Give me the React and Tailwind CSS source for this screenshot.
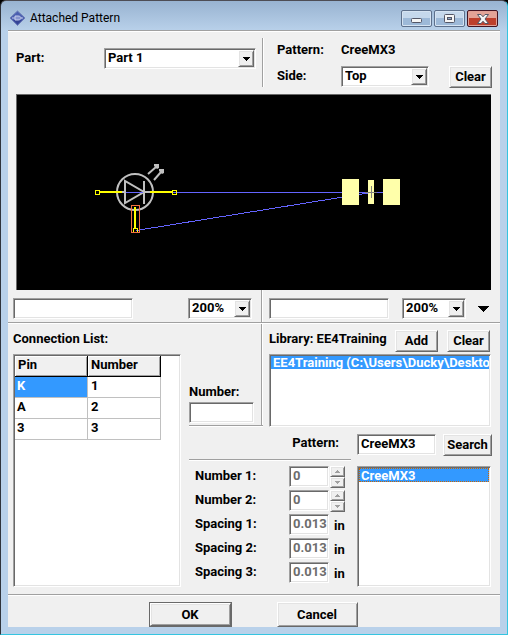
import React from "react";

const sunken =
  "border border-t-[#a0a0a0] border-l-[#a0a0a0] border-r-white border-b-white shadow-[inset_1px_1px_0_#696969,inset_-1px_-1px_0_#e3e3e3]";
const raised =
  "border border-t-white border-l-white border-r-[#696969] border-b-[#696969] bg-[#f0f0f0] shadow-[inset_1px_1px_0_#e3e3e3,inset_-1px_-1px_0_#a0a0a0]";

function Field({ className = "", ...props }) {
  return (
    <input
      type="text"
      className={`${sunken} block h-[21px] bg-white pr-0 pb-0.5 pl-[3px] outline-none disabled:text-[#6d6d6d] ${className}`}
      {...props}
    />
  );
}

function DropDown({ className = "", options, ...props }) {
  return (
    <div className={`relative ${className}`}>
      <select
        className={`${sunken} block h-[21px] w-full appearance-none bg-white pr-5 pb-0.5 pl-[3px] outline-none`}
        {...props}
      >
        {options.map((o) => (
          <option key={o}>{o}</option>
        ))}
      </select>
      <span
        className={`${raised} pointer-events-none absolute top-0.5 right-0.5 flex h-[17px] w-4 items-center justify-center`}
      >
        <svg width="7" height="4" viewBox="0 0 7 4" shapeRendering="crispEdges">
          <path d="M0 0h7v1H6v1H5v1H4v1H3V3H2V2H1V1H0z" />
        </svg>
      </span>
    </div>
  );
}

function Button({ className = "", children, ...props }) {
  return (
    <button
      type="button"
      className={`${raised} flex h-[22px] shrink-0 items-center justify-center ${className}`}
      {...props}
    >
      {children}
    </button>
  );
}

function Spinner({ label }) {
  return (
    <div className="ml-px flex w-[15px] flex-col">
      {[
        ["Increase", "M2 0h1v1h1v1h1v1H0V2h1V1h1z"],
        ["Decrease", "M0 0h5v1H4v1H3v1H2V2H1V1H0z"],
      ].map(([name, d]) => (
        <button
          key={name}
          type="button"
          disabled
          aria-label={`${name} ${label}`}
          className={`${raised} flex h-[11px] items-center justify-center`}
        >
          <svg width="5" height="3" viewBox="0 0 5 3" fill="#a0a0a0" shapeRendering="crispEdges">
            <path d={d} />
          </svg>
        </button>
      ))}
    </div>
  );
}

function HLine({ className = "" }) {
  return <div className={`h-0.5 border-t border-b border-t-[#a0a0a0] border-b-white ${className}`} />;
}

function VLine({ className = "" }) {
  return <div className={`w-0.5 border-r border-l border-r-white border-l-[#a0a0a0] ${className}`} />;
}

function TitleBar() {
  const glass =
    "flex h-[17px] w-[31px] items-center justify-center rounded-xs border border-[#5d708c] bg-linear-to-b from-[#c5d8ec] from-45% to-[#9db9d8] to-50% shadow-[inset_0_0_0_1px_#d5e3f2]";
  return (
    <header className="flex h-[29px] items-start justify-between pr-[9px] pl-2">
      <h1 className="flex items-center gap-1 pt-[9px] font-[Roboto,'Open_Sans',sans-serif] text-[12px] leading-[17px] font-normal text-black">
        <svg width="17" height="17" viewBox="0 0 17 17">
          <path d="M8.500 1 16 8 8.500 15.500 1 8z" fill="#4a5eb0" stroke="#6e7fb8" />
          <path d="M4 10 8.500 14.500 13 10z" fill="#344395" />
          <path
            d="M3 8h3m6 0h2M6 6h3c2 0 3 1 3 2s-1 2-3 2H6z"
            fill="#8795cf"
            stroke="#c5cdec"
          />
        </svg>
        Attached Pattern
      </h1>
      <div className="flex gap-0.5 pt-[9px]">
        <button type="button" aria-label="Minimize" className={glass}>
          <svg width="12" height="6" viewBox="0 0 12 6" className="mt-1">
            <rect x=".5" y=".5" width="10" height="4" rx="1" fill="#f5f5f5" stroke="#535666" />
          </svg>
        </button>
        <button type="button" aria-label="Maximize" className={glass}>
          <svg width="11" height="9" viewBox="0 0 11 9">
            <rect x=".5" y=".5" width="10" height="8" rx="1" fill="#f5f5f5" stroke="#535666" />
            <rect x="3.500" y="3.500" width="4" height="2" fill="#8fa9c9" stroke="#535666" />
          </svg>
        </button>
        <button
          type="button"
          aria-label="Close"
          className="flex h-[17px] w-[31px] items-center justify-center rounded-xs border border-[#431422] bg-linear-to-b from-[#e3a397] from-45% to-[#bd3f2c] to-50% shadow-[inset_0_0_0_1px_#e0a197]"
        >
          <svg width="12" height="10" viewBox="0 0 12 10">
            <path
              d="M.5.5h3.500L6 2.800 8 .5h3.500L8 5l3.500 4.500H8L6 7.200 4 9.500H.5L4 5z"
              fill="#f5f5f5"
              stroke="#535666"
            />
          </svg>
        </button>
      </div>
    </header>
  );
}

function Canvas() {
  return (
    <div className="mr-[9px] ml-2 border-t border-l border-[#696969] bg-black">
      <svg
        viewBox="17 95 474 195"
        className="block w-full"
        fill="none"
        role="img"
        aria-label="Symbol to pattern connections"
      >
        <g shapeRendering="crispEdges">
          <path d="M125 192h246v1H125z" fill="#6464ff" />
          <path d="M136 230.500 371 192.500" stroke="#6464ff" />
          <path d="M342 179h17v26h-17zM368 180h6v24h-6zM383 179h17v26h-17z" fill="#ffffaa" />
          <path d="M374 192h9v1h-9z" fill="#6464ff" />
          <path d="M365 192h12v1h-12zM371 186h1v12h-1z" fill="#808080" />
        </g>
        <g stroke="#c0c0c0" strokeWidth="2">
          <circle cx="135" cy="192" r="18" />
          <path d="M125 181v22l19-11zM144 181v23M144 192h9M118 192h7" />
          <path d="m148 174 8-7M154 180l7-8" />
        </g>
        <path d="m154 164 5 0v4l-2 1-3-3zM159 169h5v4l-2 1-3-3z" fill="#c0c0c0" />
        <g shapeRendering="crispEdges">
          <path d="M126 192h17v1h-17z" fill="#6464ff" />
          <path d="M100 191h22v2h-22zM150 191h22v2h-22zM134 207h2v22h-2z" fill="#ff0" />
          <path
            d="M95 190h5v5h-5zM172 190h5v5h-5zM133 228h5v5h-5zM96 191v3h3v-3zM173 191v3h3v-3zM134 229v3h3v-3z"
            fill="#ff0"
            fillRule="evenodd"
          />
          <path d="M131 205h9v28h-9zM132 206v26h7v-26z" fill="#f07040" fillRule="evenodd" />
        </g>
      </svg>
    </div>
  );
}

function PinTable() {
  const rows = [
    ["K", "1"],
    ["A", "2"],
    ["3", "3"],
  ];
  return (
    <div className={`${sunken} grow bg-white p-px`}>
      <table className="table-fixed border-separate border-spacing-0 text-left">
        <thead>
          <tr>
            {["Pin", "Number"].map((h) => (
              <th
                key={h}
                className="h-[21px] w-[73px] border-r border-b border-black bg-[#f0f0f0] p-0 pb-0.5 pl-[3px] leading-4 shadow-[inset_1px_1px_0_#fff,inset_-1px_-1px_0_#a0a0a0]"
              >
                {h}
              </th>
            ))}
          </tr>
        </thead>
        <tbody>
          {rows.map(([pin, num], i) => (
            <tr key={pin}>
              <td
                className={`h-[21px] border-r border-b border-[#c0c0c0] p-0 pb-0.5 pl-0.5 leading-4 ${i === 0 ? "bg-[#3399ff] text-white" : ""}`}
              >
                {pin}
              </td>
              <td className="h-[21px] border-r border-b border-[#c0c0c0] p-0 pb-0.5 pl-[3px] leading-4">{num}</td>
            </tr>
          ))}
        </tbody>
      </table>
    </div>
  );
}

function Parameters() {
  const items = [
    { id: "number1", label: "Number 1:", value: "0" },
    { id: "number2", label: "Number 2:", value: "0" },
    { id: "spacing1", label: "Spacing 1:", value: "0.013", unit: "in" },
    { id: "spacing2", label: "Spacing 2:", value: "0.013", unit: "in" },
    { id: "spacing3", label: "Spacing 3:", value: "0.013", unit: "in" },
  ];
  return (
    <div className="mt-[5px] flex flex-col gap-0.5 pl-1.5">
      {items.map((p) => (
        <div key={p.id} className="flex h-[22px] items-start">
          <label htmlFor={p.id} className="w-[94px] pt-0.5">
            {p.label}
          </label>
          <Field id={p.id} defaultValue={p.value} disabled className="w-10" />
          {p.unit ? <span className="pt-1 pl-[5px]">{p.unit}</span> : <Spinner label={p.label} />}
        </div>
      ))}
    </div>
  );
}

export default function App() {
  return (
    <div className="bg-black font-[Roboto,'Liberation_Sans',sans-serif] text-[13px] leading-4 font-bold text-black">
      <div className="rounded-t-md border-t border-r border-b border-l border-t-[#4d4d55] border-r-[#35c4e0] border-b-[#35c4e0] border-l-[#30343c] bg-[linear-gradient(#98b3d1,#b9d1ea_30px)]">
        <TitleBar />
        <main className="mr-[7px] mb-[7px] ml-[7px] border-t border-[#a0a0a0] bg-[#f0f0f0]">
          <section className="flex h-[63px] border-t border-white">
            <div className="flex flex-1 items-start pt-4 pl-2">
              <label htmlFor="part" className="w-[88px] pt-0.5">
                Part:
              </label>
              <DropDown id="part" options={["Part 1"]} className="mr-1.5 grow" />
            </div>
            <VLine className="mt-1.5 mb-[7px]" />
            <div className="flex w-[236px] items-end justify-between pr-2 pb-1.5 pl-[13px]">
              <div className="grid grid-cols-[64px_88px] gap-y-2 pb-px">
                <span>Pattern:</span>
                <span>CreeMX3</span>
                <label htmlFor="side" className="pt-0.5">
                  Side:
                </label>
                <DropDown id="side" options={["Top", "Bottom"]} />
              </div>
              <Button className="w-[43px]">Clear</Button>
            </div>
          </section>

          <Canvas />

          <section className="flex h-8">
            <div className="flex flex-1 items-center justify-between pt-2 pr-[9px] pb-[3px] pl-[5px]">
              <Field aria-label="Symbol name" className="w-[120px]" />
              <DropDown aria-label="Symbol zoom" options={["200%"]} className="w-16" />
            </div>
            <VLine />
            <div className="flex w-[237px] items-center pt-2 pb-[3px] pl-1.5">
              <Field aria-label="Pattern name" className="w-[120px]" />
              <DropDown aria-label="Pattern zoom" options={["200%"]} className="ml-[13px] w-16" />
              <button type="button" aria-label="More" className="ml-3">
                <svg width="11" height="6" viewBox="0 0 11 6" shapeRendering="crispEdges">
                  <path d="M0 0h11L6 6H5z" />
                </svg>
              </button>
            </div>
          </section>
          <HLine />

          <section className="flex h-[270px] pb-[7px] pl-[5px]">
            <div className="flex flex-1 flex-col">
              <h2 className="h-[30px] pt-[7px]">Connection List:</h2>
              <PinTable />
            </div>
            <div className="ml-2 flex w-[311px] flex-col">
              <div className="flex">
                <div className="flex w-[74px] flex-col">
                  <div className="flex grow">
                    <div className="flex grow flex-col justify-end pb-0.5">
                      <label htmlFor="number" className="mb-0.5">
                        Number:
                      </label>
                      <Field id="number" className="w-[65px]" />
                    </div>
                    <VLine />
                  </div>
                  <HLine />
                </div>
                <div className="flex grow flex-col pl-1.5">
                  <div className="flex h-[30px] items-start pt-1.5">
                    <span className="w-[126px] pt-px whitespace-nowrap">Library: EE4Training</span>
                    <Button className="w-[43px]">Add</Button>
                    <Button className="ml-[9px] w-[43px]">Clear</Button>
                  </div>
                  <div
                    role="listbox"
                    aria-label="Libraries"
                    className={`${sunken} h-[73px] w-[222px] overflow-hidden bg-white p-px`}
                  >
                    <div
                      role="option"
                      aria-selected="true"
                      className="h-[13px] overflow-hidden bg-[#3399ff] pl-0.5 leading-[14px] whitespace-nowrap text-white"
                    >
                      EE4Training (C:\Users\Ducky\Desktop
                    </div>
                  </div>
                </div>
              </div>
              <div className="flex grow">
                <div className="flex w-[162px] flex-col">
                  <label htmlFor="pattern" className="mt-2 mb-2 self-end pr-3">
                    Pattern:
                  </label>
                  <HLine />
                  <Parameters />
                </div>
                <div className="flex grow flex-col pt-[7px] pl-1.5">
                  <div className="flex">
                    <Field id="pattern" defaultValue="CreeMX3" className="w-[79px]" />
                    <Button className="ml-[7px] w-[49px]">Search</Button>
                  </div>
                  <div
                    role="listbox"
                    aria-label="Patterns"
                    className={`${sunken} mt-2.5 mr-[9px] grow bg-white p-px`}
                  >
                    <div
                      role="option"
                      aria-selected="true"
                      className="h-[14px] overflow-hidden border border-dotted border-[#cc6600] bg-[#3399ff] pl-px leading-[13px] text-white"
                    >
                      CreeMX3
                    </div>
                  </div>
                </div>
              </div>
            </div>
          </section>
          <HLine />

          <footer className="flex justify-center gap-[45px] pt-1.5 pr-[2px]">
            <div className="border border-[#696969]">
              <Button className="h-[23px] w-[81px]">OK</Button>
            </div>
            <Button className="h-[25px] w-[81px]">Cancel</Button>
          </footer>
        </main>
      </div>
    </div>
  );
}
